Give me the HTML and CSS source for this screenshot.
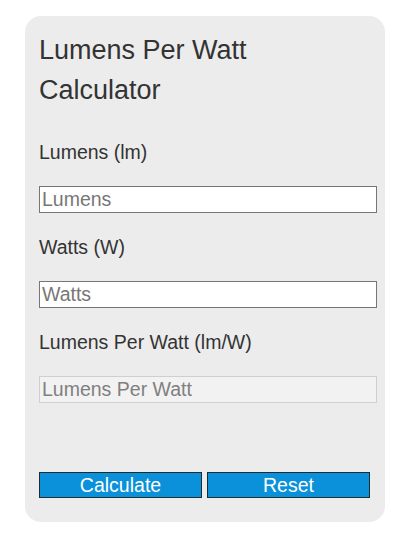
FILE: index.html
```html
<!DOCTYPE html>
<html lang="en">
<head>
<meta charset="utf-8">
<title>Lumens Per Watt Calculator</title>
<link rel="stylesheet" href="styles.css">
</head>
<body>
<div class="page">
  <form class="card">
    <h1 class="title">Lumens Per Watt Calculator</h1>
    <label class="label" for="lumens">Lumens (lm)</label>
    <input class="field" id="lumens" type="text" placeholder="Lumens">
    <label class="label" for="watts">Watts (W)</label>
    <input class="field" id="watts" type="text" placeholder="Watts">
    <label class="label" for="lpw">Lumens Per Watt (lm/W)</label>
    <input class="field field-out" id="lpw" type="text" placeholder="Lumens Per Watt" readonly>
    <div class="buttons">
      <button type="button" class="btn">Calculate</button>
      <button type="reset" class="btn">Reset</button>
    </div>
  </form>
</div>
</body>
</html>
```
FILE: styles.css
```css
html, body {
  margin: 0;
  padding: 0;
  background: #ffffff;
}
body {
  font-family: "Liberation Sans", Arial, sans-serif;
  color: #333333;
}
.page {
  padding: 16px 0 0 25px;
}
.card {
  box-sizing: border-box;
  width: 360px;
  height: 506px;
  background: #ececec;
  border-radius: 16px;
  padding: 14px 8px 0 14px;
  display: flex;
  flex-direction: column;
}
.title {
  margin: 0;
  max-width: 290px;
  font-size: 27px;
  font-weight: normal;
  line-height: 40px;
  color: #333333;
}
.label {
  display: block;
  font-size: 19.5px;
  line-height: 24px;
  margin-top: 22px;
  color: #333333;
}
.title + .label {
  margin-top: 30px;
}
.field {
  box-sizing: border-box;
  display: block;
  width: 338px;
  height: 27px;
  margin: 22px 0 0 0;
  padding: 0 2px;
  border: 1px solid #767676;
  border-radius: 0;
  background: #ffffff;
  font-family: "Liberation Sans", Arial, sans-serif;
  font-size: 19.5px;
  color: #333333;
  outline: none;
}
.field::placeholder {
  color: #777777;
  opacity: 1;
}
.field-out {
  border-color: #cfcfcf;
  background: #f2f2f2;
}
.field-out::placeholder {
  color: #808080;
}
.buttons {
  display: flex;
  gap: 5px;
  margin-top: 69px;
}
.btn {
  box-sizing: border-box;
  width: 163px;
  height: 26px;
  padding: 0;
  border: 1px solid #1f2a33;
  border-radius: 0;
  background: #0a91d9;
  color: #ffffff;
  font-family: "Liberation Sans", Arial, sans-serif;
  font-size: 19.5px;
  line-height: 24px;
}
```
